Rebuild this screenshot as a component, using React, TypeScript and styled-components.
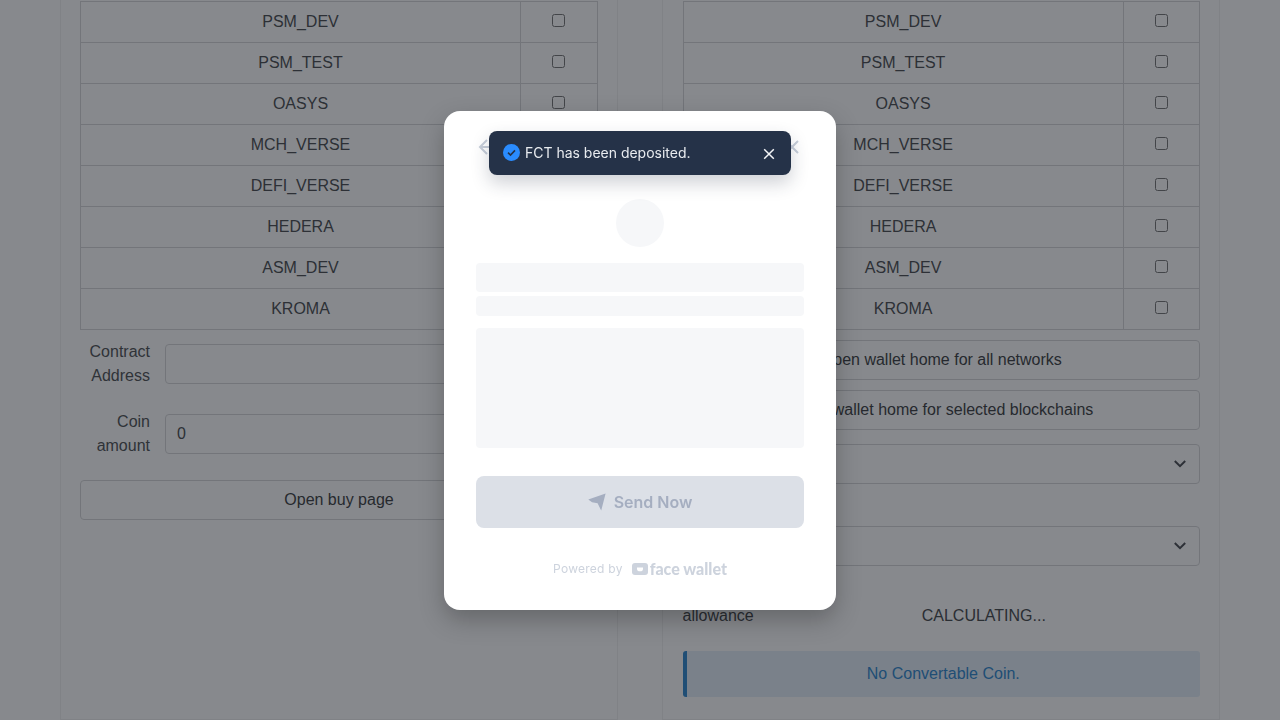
import React from 'react';
import styled, { createGlobalStyle } from 'styled-components';

const GlobalStyle = createGlobalStyle`
  html, body {
    margin: 0;
    height: 100%;
    overflow: hidden;
    background: #fff;
    font-family: 'Liberation Sans', Arial, sans-serif;
    font-size: 16px;
    color: #3c3f42;
  }
  * { box-sizing: border-box; }
`;

const Page = styled.div`
  display: grid;
  grid-template-columns: 558px 558px;
  gap: 44px;
  padding: 0 60px;
  height: 720px;
  overflow: hidden;
`;

const Card = styled.section<{ $right?: boolean }>`
  display: flex;
  flex-direction: column;
  height: 720px;
  padding: 1px 19px 0 ${(p) => (p.$right ? 19.6 : 19)}px;
  border: 1px solid #f1f1f1;
  border-top: 0;
  background: #fff;
`;

const NetworkTable = styled.table`
  width: 100%;
  table-layout: fixed;
  border-collapse: collapse;
  flex: none;
`;

const NameCell = styled.td`
  width: 440px;
  height: 41px;
  padding: 8px;
  border: 1px solid #d6d7d9;
  text-align: center;
  line-height: 24px;
  color: #4a4d50;
`;

const CheckCell = styled.td<{ $inset: number }>`
  padding: 0 ${(p) => p.$inset}px 0 0;
  border: 1px solid #d6d7d9;
  text-align: center;
  line-height: 24px;
`;

const Check = styled.input`
  margin: 0;
  width: 13px;
  height: 13px;
`;

const FormRows = styled.div`
  display: flex;
  flex-direction: column;
  gap: 22px;
  margin-top: 10px;
`;

const FormRow = styled.div`
  display: flex;
  align-items: center;
  gap: 15px;
`;

const FieldLabel = styled.label`
  flex: 0 0 70px;
  text-align: right;
  line-height: 24px;
  color: #4f5254;
`;

const TextField = styled.div`
  flex: 1;
  display: flex;
  align-items: center;
  height: 40px;
  padding: 0 11px;
  border: 1px solid #d6d7d9;
  border-radius: 4px;
  background: #fff;
  color: #4a4d50;
`;

const OutlineButton = styled.div<{ $top?: number }>`
  display: flex;
  align-items: center;
  justify-content: center;
  height: 40px;
  margin-top: ${(p) => p.$top ?? 0}px;
  border: 1px solid #d6d7d9;
  border-radius: 4px;
  flex: none;
`;

const SelectBox = styled.div<{ $top: number }>`
  display: flex;
  align-items: center;
  justify-content: flex-end;
  height: 40px;
  margin-top: ${(p) => p.$top}px;
  padding-right: 13px;
  border: 1px solid #d6d7d9;
  border-radius: 4px;
  flex: none;
`;

const AllowanceRow = styled.div`
  display: grid;
  grid-template-columns: 85px 1fr;
  margin-top: 38px;
  line-height: 24px;
  color: #45484b;
`;

const AllowanceValue = styled.span`
  text-align: center;
`;

const InfoAlert = styled.div`
  display: flex;
  align-items: center;
  justify-content: center;
  height: 46px;
  margin-top: 23px;
  border-left: 4px solid #3088cf;
  border-radius: 3px;
  background: #e4eff8;
  color: #3088cf;
`;

const Overlay = styled.div`
  position: fixed;
  inset: 0;
  display: flex;
  align-items: center;
  justify-content: center;
  background: rgba(15, 19, 27, 0.5);
`;

const Modal = styled.div`
  position: relative;
  width: 392px;
  height: 499px;
  padding: 24px 32px 0;
  border-radius: 16px;
  background: #fff;
  box-shadow: 0 10px 25px rgba(0, 0, 0, 0.25);
  font-family: Inter, 'Noto Sans', sans-serif;
`;

const ModalHeader = styled.div`
  display: flex;
  justify-content: space-between;
  align-items: center;
  height: 24px;
  color: #c6cdd8;
`;

const Toast = styled.div`
  position: absolute;
  top: 20px;
  left: 45px;
  display: flex;
  align-items: center;
  gap: 5px;
  width: 302px;
  height: 44px;
  padding: 0 16px 0 14px;
  border-radius: 8px;
  background: #253248;
  box-shadow: 0 8px 18px rgba(36, 47, 68, 0.22);
  color: #e8ebef;
  font-size: 14px;
`;

const ToastText = styled.span`
  flex: 1;
  letter-spacing: -0.01px;
`;

const ToastClose = styled.svg`
  margin-top: 2px;
`;

const Avatar = styled.div`
  width: 48px;
  height: 48px;
  margin: 40px auto 16px;
  border-radius: 50%;
  background: #f6f7f9;
`;

const Skeleton = styled.div<{ $height: number; $top?: number }>`
  height: ${(p) => p.$height}px;
  margin-top: ${(p) => p.$top ?? 0}px;
  border-radius: 4px;
  background: #f6f7f9;
`;

const SendButton = styled.div`
  display: flex;
  align-items: center;
  justify-content: center;
  gap: 8px;
  height: 52px;
  margin-top: 28px;
  border-radius: 8px;
  background: #dce0e7;
  color: #a5aec0;
  font-size: 16px;
  font-weight: 600;
`;

const PoweredBy = styled.div`
  display: flex;
  align-items: center;
  justify-content: center;
  gap: 9px;
  height: 18px;
  margin-top: 32px;
  color: #cdd3dd;
  font-size: 12px;
  letter-spacing: 0.25px;
`;

const Brand = styled.span`
  display: flex;
  align-items: center;
  gap: 2px;
  font-family: Lato, Inter, sans-serif;
  font-size: 16px;
  font-weight: 900;
  letter-spacing: 0;
`;

const networks = ['PSM_DEV', 'PSM_TEST', 'OASYS', 'MCH_VERSE', 'DEFI_VERSE', 'HEDERA', 'ASM_DEV', 'KROMA'];

const Networks: React.FC<{ checkInset: number }> = ({ checkInset }) => (
  <NetworkTable>
    <tbody>
      {networks.map((name) => (
        <tr key={name}>
          <NameCell>{name}</NameCell>
          <CheckCell $inset={checkInset}>
            <Check type="checkbox" />
          </CheckCell>
        </tr>
      ))}
    </tbody>
  </NetworkTable>
);

const Chevron: React.FC = () => (
  <svg width="12" height="8" viewBox="0 0 12 8" fill="none">
    <path d="M.8 1 6 6.2 11.2 1" stroke="#4a4d52" strokeWidth="2" />
  </svg>
);

const App: React.FC = () => (
  <>
    <GlobalStyle />
    <Page>
      <Card>
        <Networks checkInset={1} />
        <FormRows>
          <FormRow>
            <FieldLabel>Contract Address</FieldLabel>
            <TextField />
          </FormRow>
          <FormRow>
            <FieldLabel>Coin amount</FieldLabel>
            <TextField>0</TextField>
          </FormRow>
          <OutlineButton>Open buy page</OutlineButton>
        </FormRows>
      </Card>
      <Card $right>
        <Networks checkInset={0} />
        <OutlineButton $top={10}>Open wallet home for all networks</OutlineButton>
        <OutlineButton $top={10}>Open wallet home for selected blockchains</OutlineButton>
        <SelectBox $top={14}>
          <Chevron />
        </SelectBox>
        <SelectBox $top={42}>
          <Chevron />
        </SelectBox>
        <AllowanceRow>
          <span>allowance</span>
          <AllowanceValue>CALCULATING...</AllowanceValue>
        </AllowanceRow>
        <InfoAlert>No Convertable Coin.</InfoAlert>
      </Card>
    </Page>
    <Overlay>
      <Modal>
        <ModalHeader>
          <svg width="24" height="24" viewBox="0 0 24 24" fill="none" stroke="currentColor" strokeWidth="2">
            <path d="M12 5l-7 7 7 7M5 12h14" transform="translate(-1 0)" />
          </svg>
          <svg width="24" height="24" viewBox="0 0 24 24" fill="none" stroke="currentColor" strokeWidth="2">
            <path d="M6 6l12 12M18 6 6 18" />
          </svg>
        </ModalHeader>
        <Toast>
          <svg width="17" height="17" viewBox="0 0 17 17">
            <circle cx="8.5" cy="8.5" r="8.5" fill="#2a8cff" />
            <path d="M5 8.7l2.5 2.4L12 6.4" fill="none" stroke="#253248" strokeWidth="1.6" />
          </svg>
          <ToastText>FCT has been deposited.</ToastText>
          <ToastClose width="12" height="12" viewBox="0 0 12 12">
            <path d="M1.2 1.2l9.6 9.6M10.8 1.2l-9.6 9.6" stroke="#f4f5f7" strokeWidth="1.5" />
          </ToastClose>
        </Toast>
        <Avatar />
        <Skeleton $height={29} />
        <Skeleton $height={20} $top={4} />
        <Skeleton $height={120} $top={12} />
        <SendButton>
          <svg width="18" height="18" viewBox="0 0 18 18" fill="currentColor">
            <path d="M.3 6.5 17.6.5 13.2 17.6 9.6 10.2 4 9.2z" />
          </svg>
          Send Now
        </SendButton>
        <PoweredBy>
          Powered by
          <Brand>
            <svg width="16" height="12" viewBox="0 0 16 12">
              <rect width="16" height="12" rx="3" fill="currentColor" />
              <path d="M5 4.5h6v1.2a3 2.6 0 0 1-6 0z" fill="#fff" />
            </svg>
            face wallet
          </Brand>
        </PoweredBy>
      </Modal>
    </Overlay>
  </>
);

export default App;
